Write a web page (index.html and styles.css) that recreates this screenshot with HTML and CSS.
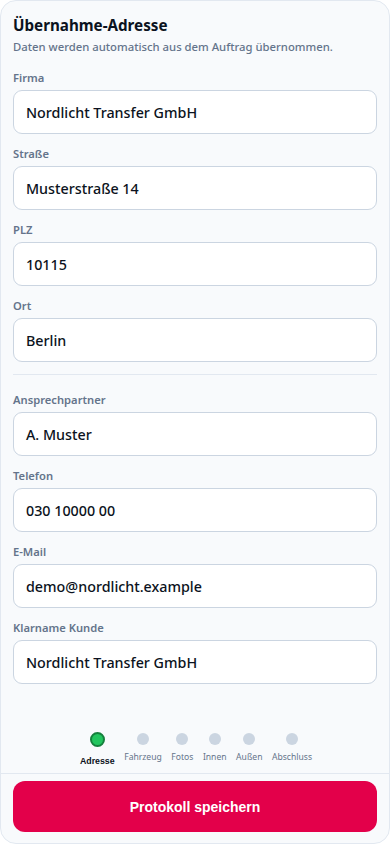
FILE: index.html
```html
<!DOCTYPE html>
<html lang="de">
<head>
<meta charset="utf-8">
<link rel="stylesheet" href="styles.css">
</head>
<body>
<div class="card">
  <div class="content">
    <h1 class="title">Übernahme-Adresse</h1>
    <p class="subtitle">Daten werden automatisch aus dem Auftrag übernommen.</p>
    <div class="form">
      <div class="field"><label class="label">Firma</label><div class="input">Nordlicht Transfer GmbH</div></div>
      <div class="field"><label class="label">Straße</label><div class="input">Musterstraße 14</div></div>
      <div class="field"><label class="label">PLZ</label><div class="input">10115</div></div>
      <div class="field"><label class="label">Ort</label><div class="input">Berlin</div></div>
      <hr class="divider">
      <div class="field"><label class="label">Ansprechpartner</label><div class="input">A. Muster</div></div>
      <div class="field"><label class="label">Telefon</label><div class="input">030 10000 00</div></div>
      <div class="field"><label class="label">E-Mail</label><div class="input">demo@nordlicht.example</div></div>
      <div class="field"><label class="label">Klarname Kunde</label><div class="input">Nordlicht Transfer GmbH</div></div>
    </div>
  </div>
  <div class="steps">
    <div class="step active"><span class="dot"></span><span class="step-label">Adresse</span></div>
    <div class="step"><span class="dot"></span><span class="step-label">Fahrzeug</span></div>
    <div class="step"><span class="dot"></span><span class="step-label">Fotos</span></div>
    <div class="step"><span class="dot"></span><span class="step-label">Innen</span></div>
    <div class="step"><span class="dot"></span><span class="step-label">Außen</span></div>
    <div class="step"><span class="dot"></span><span class="step-label">Abschluss</span></div>
  </div>
  <div class="footer">
    <button class="save">Protokoll speichern</button>
  </div>
</div>
</body>
</html>
```
FILE: styles.css
```css
* { box-sizing: border-box; }
html, body { margin: 0; padding: 0; background: #ffffff; }
body { font-family: "Noto Sans", "Open Sans", sans-serif; color: #0f172a; }
.card {
  width: 390px;
  height: 844px;
  background: #f8fafc;
  border: 1px solid #e2e8f0;
  border-radius: 16px;
  display: flex;
  flex-direction: column;
  overflow: hidden;
}
.content { padding: 13px 12px 0 12px; flex: 1; }
.title { margin: 0; font-size: 15.2px; line-height: 22px; font-weight: 700; color: #0b1220; }
.subtitle { margin: 3px 0 0 0; font-size: 11.3px; line-height: 16px; color: #64748b; font-weight: 500; }
.form { margin-top: 15px; display: flex; flex-direction: column; gap: 12px; }
.field { display: flex; flex-direction: column; gap: 4px; }
.label { font-size: 11.2px; line-height: 16px; font-weight: 600; color: #64748b; }
.input {
  height: 44px;
  background: #ffffff;
  border: 1px solid #cbd5e1;
  border-radius: 9px;
  padding: 0 12px;
  display: flex;
  align-items: center;
  font-size: 14.3px;
  font-weight: 500;
  color: #0b1220;
}
.divider { border: 0; border-top: 1px solid #e2e8f0; margin: 0 0 5px 0; height: 0; }
.steps {
  display: flex;
  justify-content: center;
  gap: 9.5px;
  padding: 0 0 6px 0;
  margin-left: 2px;
}
.step { display: flex; flex-direction: column; align-items: center; gap: 6px; }
.dot { width: 12px; height: 12px; border-radius: 50%; background: #cbd5e1; margin-top: 1px; }
.step.active .dot { width: 15px; height: 15px; margin-top: 0; background: #22c55e; border: 2px solid #15803d; }
.step-label { font-size: 8.6px; line-height: 12px; color: #64748b; font-family: "Noto Sans", sans-serif; }
.step.active .step-label { color: #0b1220; font-weight: 700; font-family: "Liberation Sans", Arial, sans-serif; margin-top: 2px; font-size: 8.8px; }
.footer { border-top: 1px solid #e2e8f0; padding: 7px 12px 11px 12px; }
.save {
  width: 100%;
  height: 51px;
  border: 0;
  border-radius: 12px;
  background: #e3004a;
  color: #ffffff;
  font-family: "Liberation Sans", Arial, sans-serif;
  font-weight: 700;
  font-size: 14px;
}
```
